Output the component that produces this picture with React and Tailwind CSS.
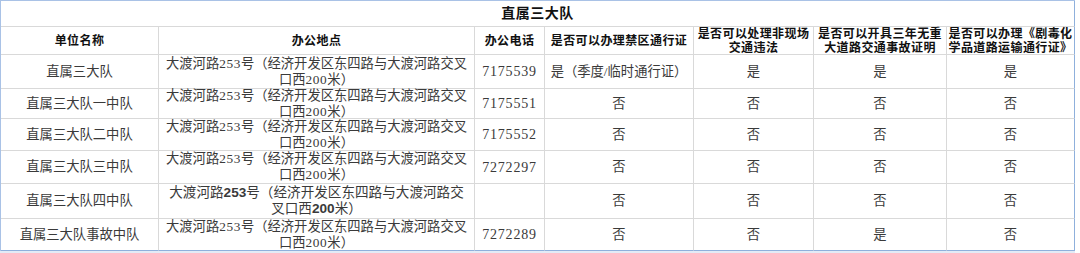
import React from 'react';

const serif = { fontFamily: '"Liberation Serif", "Noto Sans CJK SC", serif' };

const headers = [
  ['单位名称'],
  ['办公地点'],
  ['办公电话'],
  ['是否可以办理禁区通行证'],
  ['是否可以处理非现场', '交通违法'],
  ['是否可以开具三年无重', '大道路交通事故证明'],
  ['是否可以办理《剧毒化', '学品道路运输通行证》'],
];

const rows = [
  { name: '直属三大队', tel: '7175539', c: ['是（季度/临时通行证）', '是', '是', '是'] },
  { name: '直属三大队一中队', tel: '7175551', c: ['否', '否', '否', '否'] },
  { name: '直属三大队二中队', tel: '7175552', c: ['否', '否', '否', '否'] },
  { name: '直属三大队三中队', tel: '7272297', c: ['否', '否', '否', '否'] },
  { name: '直属三大队四中队', tel: '', c: ['否', '否', '否', '否'], odd: true },
  { name: '直属三大队事故中队', tel: '7272289', c: ['否', '否', '是', '否'], last: true },
];

function Cell({ children, lastCol, lastRow, className = '' }) {
  const r = lastCol ? 'border-r border-r-[#8fb0dc]' : 'border-r border-r-[#d9d9d9]';
  const b = lastRow ? 'border-b border-b-[#8fb0dc]' : 'border-b border-b-[#d9d9d9]';
  return (
    <div className={`${r} ${b} flex items-center justify-center text-center whitespace-nowrap ${className}`}>
      {children}
    </div>
  );
}

function Address({ odd }) {
  if (odd) {
    return (
      <div className="text-[13.6px] leading-[16px]">
        大渡河路<span className="font-bold" style={{ fontFamily: '"Liberation Sans", sans-serif' }}>253</span>号（经济开发区东四路与大渡河路交
        <br />
        叉口西<span className="font-bold" style={{ fontFamily: '"Liberation Sans", sans-serif' }}>200</span>米）
      </div>
    );
  }
  return (
    <div className="text-[13.3px] leading-[16px]">
      大渡河路<span className="tracking-[0.6px]">253</span>号（经济开发区东四路与大渡河路交叉
      <br />
      口西<span className="tracking-[0.6px]">200</span>米）
    </div>
  );
}

export default function App() {
  return (
    <div className="w-[1080px] h-[253px] bg-white" style={serif}>
      <div className="w-[1075px] grid grid-cols-[158px_316px_70px_149px_120px_133px_128px] grid-rows-[26px_28px_34px_30px_32px_33px_35px_32px] border-l border-t border-[#a9c2e6] text-[13.3px] text-[#3a3a3a]">
        <Cell lastCol className="col-span-7 font-bold text-[14px] tracking-[0.5px] text-[#111]">直属三大队</Cell>
        {headers.map((h, i) => (
          <Cell key={i} lastCol={i === 6} className="flex-col font-bold text-[12px] tracking-[0.4px] text-[#111] leading-[14px]">
            {h.map((line, j) => (
              <div key={j}>{line}</div>
            ))}
          </Cell>
        ))}
        {rows.map((row, ri) => (
          <React.Fragment key={ri}>
            <Cell lastRow={row.last}>{row.name}</Cell>
            <Cell lastRow={row.last}>
              <Address odd={row.odd} />
            </Cell>
            <Cell lastRow={row.last} className="text-[14px] tracking-[0.8px]">{row.tel}</Cell>
            {row.c.map((v, ci) => (
              <Cell key={ci} lastRow={row.last} lastCol={ci === 3}>
                {v}
              </Cell>
            ))}
          </React.Fragment>
        ))}
      </div>
      <div className="h-[2px] w-[1075px] bg-[#e3ebf6]" />
    </div>
  );
}
